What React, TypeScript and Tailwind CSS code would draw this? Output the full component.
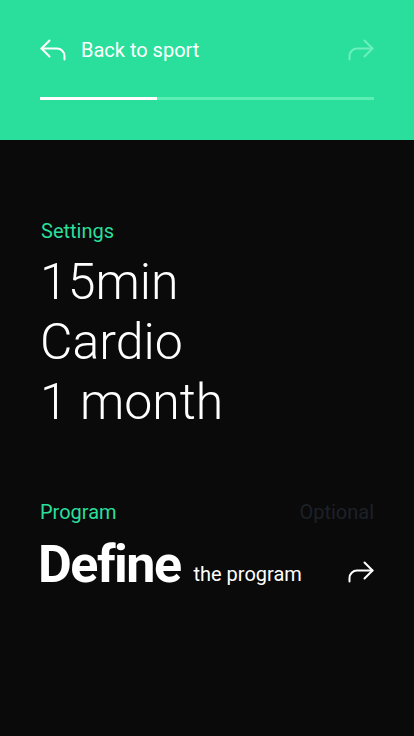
import React from 'react';

const BackArrow = ({ className }: { className?: string }) => (
    <svg className={className} width="26" height="22" viewBox="0 0 26 22" fill="none" stroke="currentColor" strokeWidth="2" strokeLinecap="round" strokeLinejoin="round">
        <polyline points="9.5,1.5 1.5,9.5 9.5,17.5" />
        <path d="M1.5 9.5 H17 a7.5 7.5 0 0 1 7.5 7.5 V20.5" />
    </svg>
)

const ForwardArrow = ({ className }: { className?: string }) => (
    <svg className={className} width="26" height="22" viewBox="0 0 26 22" fill="none" stroke="currentColor" strokeWidth="2" strokeLinecap="round" strokeLinejoin="round">
        <polyline points="16.5,1.5 24.5,9.5 16.5,17.5" />
        <path d="M24.5 9.5 H9 a7.5 7.5 0 0 0 -7.5 7.5 V20.5" />
    </svg>
)

const App = () => {
    const progress = 35

    return (
        <div className="w-[414px] h-[736px] bg-[#0a0a0a] flex flex-col font-['Roboto',sans-serif]">
            <div className="h-[140px] bg-[#2adf9b] px-10 pt-[39px] flex flex-col">
                <div className="flex items-center h-[22px]">
                    <BackArrow className="text-white" />
                    <div className="ml-[15px] text-white text-[20px] leading-none">Back to sport</div>
                    <ForwardArrow className="ml-auto text-[#6cefbd]" />
                </div>
                <div className="mt-[36px] h-[3px] bg-[#5cefb4] flex">
                    <div className="h-full bg-white" style={{ width: `${progress}%` }} />
                </div>
            </div>

            <div className="px-10 pt-[80px] flex flex-col">
                <div className="text-[#2adf9b] text-[20px] leading-[22px] ml-[1px]">Settings</div>
                <div className="mt-[10px] text-white text-[50px] font-light leading-[60px]">
                    <div>15min</div>
                    <div>Cardio</div>
                    <div>1 month</div>
                </div>

                <div className="mt-[69px] flex justify-between text-[20px] leading-[22px]">
                    <div className="text-[#2adf9b]">Program</div>
                    <div className="text-[#1d2128]">Optional</div>
                </div>
                <div className="mt-[16px] flex items-end">
                    <div className="text-white text-[52px] font-bold leading-[52px] tracking-[-1.5px] -ml-[2px]">Define</div>
                    <div className="ml-[13px] mb-[6px] text-white text-[20px] leading-[22px]">the program</div>
                    <ForwardArrow className="ml-auto mb-[8px] text-white" />
                </div>
            </div>
        </div>
    )
}

export default App
